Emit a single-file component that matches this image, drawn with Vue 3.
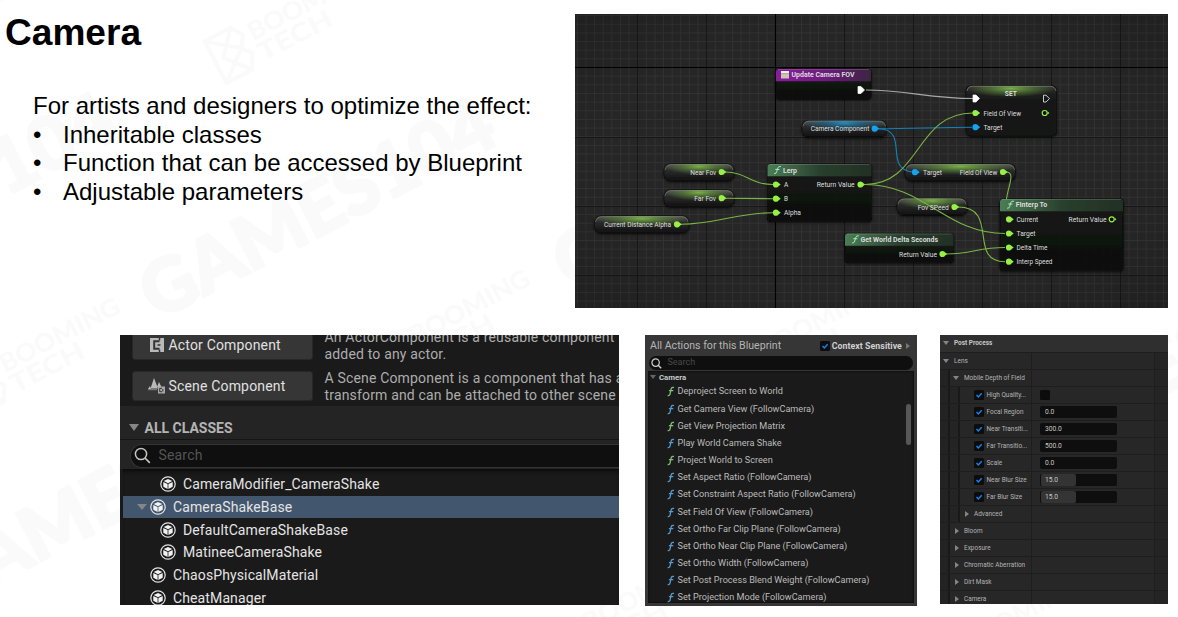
<script setup>
const bullets = ['Inheritable classes', 'Function that can be accessed by Blueprint', 'Adjustable parameters']

/* blueprint graph data */
const cols = Array.from({ length: 70 }, (_, i) => 568.7 + i * 8.62)
const rows = Array.from({ length: 36 }, (_, i) => 15.6 + i * 8.65)
const majorX = [637.5, 706.5, 844.5, 913.5, 982.5, 1051.5, 1120.5]
const majorY = [137.5, 206.5, 275.5]

const pills = [
  { x: 802, y: 120.5, w: 84.5, fill: 'url(#pillBlue)' },
  { x: 905, y: 164, w: 110.5, fill: 'url(#pillGreen)' },
  { x: 664, y: 164, w: 70, fill: 'url(#pillGreen)' },
  { x: 664, y: 190, w: 70, fill: 'url(#pillGreen)' },
  { x: 594.5, y: 216, w: 94.5, fill: 'url(#pillGreen)' },
  { x: 897, y: 198.3, w: 70, fill: 'url(#pillGreen)' },
]
const boxes = [
  { x: 776, y: 69, w: 95, h: 30, head: 'url(#headPurple)' },
  { x: 767.5, y: 164, w: 104, h: 57.5, head: 'url(#headGreen)' },
  { x: 845, y: 233.5, w: 108.5, h: 29, head: 'url(#headGreen)' },
  { x: 1000, y: 199, w: 123, h: 71.5, head: 'url(#headGreen)' },
]
const wires = [
  { c: 'w', d: 'M866 90 C905 90 930 98.5 973 98.5' },
  { c: 'b', d: 'M879 128.8 C910 128.8 940 127.3 972 127.3' },
  { c: 'b', d: 'M879 128.8 C910 130 883 168 912 172' },
  { c: 'g', d: 'M865 184.5 C921 184.5 915 113 973 113' },
  { c: 'g', d: 'M865 184.5 C925 184.5 945 233.5 1005 233.5' },
  { c: 'g', d: 'M1006 172 C1016 172 1008 186 1006.5 199' },
  { c: 'g', d: 'M958 207 C1000 207 967 261.7 1005 261.7' },
  { c: 'g', d: 'M946 254 C972 254 978 247.5 1005 247.5' },
  { c: 'g', d: 'M725 172 C747 172 750 184.5 773 184.5' },
  { c: 'g', d: 'M725 198.2 L773 198.7' },
  { c: 'g', d: 'M681 224.3 C716 224.3 737 212.7 773 212.7' },
]
const pins = [
  [721.7, 172], [721.7, 198.2], [677, 224.3], [776, 184.5], [776, 198.7], [776, 212.7],
  [860.5, 184.5], [954.5, 207], [942.5, 254], [1003, 172], [975.5, 113],
  [1009, 219.3], [1009, 233.5], [1009, 247.5], [1009, 261.7],
]
const bluePins = [[874.7, 128.7], [975.5, 127.2], [915, 172.2]]
const hollowPins = [[1044.7, 113], [1111.7, 219.3]]
const labels = [
  ['Camera Component', 810.7, 131.2, 58.6], ['Field Of View', 983.5, 115.5, 37.5],
  ['Target', 983.5, 129.7, 18.8], ['Target', 923, 174.7, 19], ['Field Of View', 959.8, 174.7, 37.5],
  ['Near Fov', 690.3, 174.6, 26], ['Far Fov', 694.3, 200.7, 21.7],
  ['Current Distance Alpha', 604, 226.8, 67], ['A', 784, 187, 4.3], ['B', 784, 201.2, 4],
  ['Alpha', 784, 215.2, 17], ['Return Value', 816.7, 187, 38], ['Fov SPeed', 917.7, 209.5, 31],
  ['Return Value', 899, 256.5, 38], ['Current', 1016.5, 221.8, 21.7], ['Target', 1016.5, 236, 19],
  ['Delta Time', 1016.5, 250, 31], ['Interp Speed', 1016.5, 264.2, 36], ['Return Value', 1068.5, 221.8, 38],
]
const titles = [
  ['Update Camera FOV', 791.5, 77, 63], ['SET', 1004.8, 95.8, 12], ['Lerp', 783, 172.6, 14],
  ['Get World Delta Seconds', 860.5, 242, 77.5], ['FInterp To', 1015.7, 207.2, 31.6],
]
const fnGlyphs = [[774.5, 165.7], [852.5, 235], [1007.5, 200.3]]

/* class picker */
const classes = [
  { name: 'CameraModifier_CameraShake', child: true },
  { name: 'CameraShakeBase', selected: true },
  { name: 'DefaultCameraShakeBase', child: true },
  { name: 'MatineeCameraShake', child: true },
  { name: 'ChaosPhysicalMaterial' },
  { name: 'CheatManager' },
]

/* blueprint actions */
const actions = [
  ['Deproject Screen to World', 'pure'], ['Get Camera View (FollowCamera)', 'call'],
  ['Get View Projection Matrix', 'pure'], ['Play World Camera Shake', 'call'],
  ['Project World to Screen', 'pure'], ['Set Aspect Ratio (FollowCamera)', 'call'],
  ['Set Constraint Aspect Ratio (FollowCamera)', 'call'], ['Set Field Of View (FollowCamera)', 'call'],
  ['Set Ortho Far Clip Plane (FollowCamera)', 'call'], ['Set Ortho Near Clip Plane (FollowCamera)', 'call'],
  ['Set Ortho Width (FollowCamera)', 'call'], ['Set Post Process Blend Weight (FollowCamera)', 'call'],
  ['Set Projection Mode (FollowCamera)', 'call'],
]

/* post process details */
const details = [
  { t: 'Post Process', kind: 'head', open: true },
  { t: 'Lens', kind: 'l0', open: true },
  { t: 'Mobile Depth of Field', kind: 'l1', open: true },
  { t: 'High Quality...', kind: 'prop', box: true },
  { t: 'Focal Region', kind: 'prop', v: '0.0' },
  { t: 'Near Transiti...', kind: 'prop', v: '300.0' },
  { t: 'Far Transitio...', kind: 'prop', v: '500.0' },
  { t: 'Scale', kind: 'prop', v: '0.0' },
  { t: 'Near Blur Size', kind: 'prop', v: '15.0', fill: 45 },
  { t: 'Far Blur Size', kind: 'prop', v: '15.0', fill: 45 },
  { t: 'Advanced', kind: 'l2' },
  { t: 'Bloom', kind: 'l1' },
  { t: 'Exposure', kind: 'l1' },
  { t: 'Chromatic Aberration', kind: 'l1' },
  { t: 'Dirt Mask', kind: 'l1' },
  { t: 'Camera', kind: 'l1' },
]
</script>

<template>
  <main class="slide">
    <svg class="watermark" viewBox="0 0 1178 617" aria-hidden="true">
      <g class="wm-big">
        <text transform="translate(157 321) rotate(-27.5)" textLength="388" lengthAdjust="spacingAndGlyphs">GAMES104</text>
        <text transform="translate(-224 316) rotate(-27.5)" textLength="388" lengthAdjust="spacingAndGlyphs">GAMES104</text>
        <text transform="translate(570 291) rotate(-27.5)" textLength="388" lengthAdjust="spacingAndGlyphs">GAMES104</text>
        <text transform="translate(-57 612) rotate(-27.5)" textLength="388" lengthAdjust="spacingAndGlyphs">GAMES104</text>
        <text transform="translate(-18 10) rotate(-27.5)">G</text>
        <text transform="translate(1000 480) rotate(-27.5)" textLength="388" lengthAdjust="spacingAndGlyphs">GAMES104</text>
      </g>
      <g class="wm-small">
        <g v-for="(p, i) in [[253, 41], [5, 373], [415, 345], [763, 359], [965, 652], [588, 632]]" :key="i" :transform="`translate(${p[0]} ${p[1]}) rotate(-27.5)`">
          <text textLength="132" lengthAdjust="spacingAndGlyphs">BOOMING</text>
          <text y="23" textLength="80" lengthAdjust="spacingAndGlyphs">TECH</text>
          <path d="M-43 -22 L-14 -22 -6 -10 -14 1 -6 10 -14 25 -43 25Z M-43 -22 L-14 1 -43 25 M-14 -22 L-34 1 -14 25" />
        </g>
      </g>
    </svg>

    <section class="top">
      <div class="copy">
        <h1>Camera</h1>
        <p>For artists and designers to optimize the effect:</p>
        <ul>
          <li v-for="b in bullets" :key="b"><span class="dot">•</span>{{ b }}</li>
        </ul>
      </div>

      <svg class="graph" viewBox="575 14 593 294" width="593" height="294">
        <defs>
          <linearGradient id="body" x1="0" y1="0" x2="0" y2="1">
            <stop offset="0" stop-color="#191b19" /><stop offset="1" stop-color="#0d0f0d" />
          </linearGradient>
          <linearGradient id="pillBase" x1="0" y1="0" x2="0" y2="1">
            <stop offset="0" stop-color="#555" /><stop offset=".35" stop-color="#2c2c2c" /><stop offset="1" stop-color="#101010" />
          </linearGradient>
          <linearGradient id="headGreen"><stop offset="0" stop-color="#4a7d56" /><stop offset=".28" stop-color="#3a5c41" /><stop offset=".5" stop-color="#29402e" /><stop offset="1" stop-color="#223024" /></linearGradient>
          <linearGradient id="headPurple"><stop offset="0" stop-color="#8a1a9c" /><stop offset=".55" stop-color="#6b1a7b" /><stop offset="1" stop-color="#3b2640" /></linearGradient>
          <radialGradient id="pillGreen" cx=".5" cy=".15" r=".5"><stop offset="0" stop-color="#7db648" stop-opacity=".95" /><stop offset=".5" stop-color="#5b8738" stop-opacity=".6" /><stop offset="1" stop-color="#5b8738" stop-opacity="0" /></radialGradient>
          <radialGradient id="pillBlue" cx=".5" cy=".15" r=".5"><stop offset="0" stop-color="#2b8fbd" stop-opacity=".95" /><stop offset=".5" stop-color="#1c6487" stop-opacity=".6" /><stop offset="1" stop-color="#1c6487" stop-opacity="0" /></radialGradient>
          <radialGradient id="vignette" cx=".5" cy=".5" r=".75"><stop offset=".6" stop-opacity="0" /><stop offset="1" stop-opacity=".2" /></radialGradient>
          <filter id="shadow" x="-10%" y="-20%" width="120%" height="150%"><feDropShadow dx="0" dy="1" stdDeviation="1.5" flood-opacity=".8" /></filter>
        </defs>
        <rect x="575" y="14" width="593" height="294" fill="#262626" />
        <g stroke="#333333" stroke-width="1">
          <line v-for="x in cols" :key="'c' + x" :x1="x" :x2="x" y1="14" y2="308" />
          <line v-for="y in rows" :key="'r' + y" :y1="y" :y2="y" x1="575" x2="1168" />
        </g>
        <g stroke="#171717" stroke-width="1">
          <line v-for="x in majorX" :key="'mx' + x" :x1="x" :x2="x" y1="14" y2="308" />
          <line v-for="y in majorY" :key="'my' + y" :y1="y" :y2="y" x1="575" x2="1168" />
        </g>
        <path d="M775.5 14V308M575 67.5H1168" stroke="#000" stroke-width="1.2" />
        <rect x="575" y="14" width="593" height="294" fill="url(#vignette)" />

        <g filter="url(#shadow)">
          <g v-for="(p, i) in pills" :key="i">
            <rect :x="p.x" :y="p.y" :width="p.w" height="16.8" rx="6.5" fill="url(#pillBase)" stroke="#0b0b0b" stroke-width=".6" />
            <rect :x="p.x + 1" :y="p.y" :width="p.w - 2" height="16.5" rx="6" :fill="p.fill" />
            <path :d="`M${p.x + 1} ${p.y + 6}q1-5 6-5.4H${p.x + p.w - 7}q5 .4 6 5.4`" fill="none" stroke="#bbb" stroke-opacity=".38" stroke-width=".8" />
          </g>
          <g v-for="(b, i) in boxes" :key="'b' + i">
            <rect :x="b.x" :y="b.y" :width="b.w" :height="b.h" rx="3" fill="url(#body)" fill-opacity=".92" stroke="#080808" stroke-width=".6" />
            <path :d="`M${b.x} ${b.y + 12.2}v-9.2q0-3 3-3h${b.w - 6}q3 0 3 3v9.2z`" :fill="b.head" />
            <path :d="`M${b.x + 2} ${b.y + 0.5}h${b.w - 4}`" stroke="#fff" stroke-opacity=".2" stroke-width=".8" />
          </g>
          <rect x="966" y="85.7" width="90.5" height="50.3" rx="5" fill="#161816" fill-opacity=".93" stroke="#0b0b0b" stroke-width=".6" />
          <rect x="966.5" y="86" width="89.5" height="17" rx="5" fill="url(#pillBase)" fill-opacity=".5" />
          <rect x="967" y="86" width="88" height="17" rx="5" fill="url(#pillGreen)" />
          <path d="M967 91q1-4.500 5-4.800H1050q5 .3 6 4.800" fill="none" stroke="#bbb" stroke-opacity=".5" stroke-width=".8" />
        </g>

        <path v-for="(w, i) in wires" :key="'w' + i" :d="w.d" :class="['wire', w.c]" />

        <g fill="#96f045">
          <path v-for="(p, i) in pins" :key="'p' + i" :d="`M${p[0]} ${p[1] - 3.1}a3.100 3.100 0 1 0 0 6.200q2 0 2.700-1.500l2-1.600-2-1.600q-.7-1.500-2.700-1.500z`" />
        </g>
        <g fill="#14a3f0">
          <path v-for="(p, i) in bluePins" :key="'bp' + i" :d="`M${p[0]} ${p[1] - 3.1}a3.100 3.100 0 1 0 0 6.200q2 0 2.700-1.500l2-1.600-2-1.600q-.7-1.500-2.700-1.500z`" />
        </g>
        <g v-for="(p, i) in hollowPins" :key="'h' + i">
          <circle :cx="p[0]" :cy="p[1]" r="2.500" fill="#0c0e0c" stroke="#96f045" stroke-width="1.200" />
          <path :d="`M${p[0] + 3} ${p[1] - 1.5}l1.700 1.500-1.700 1.500z`" fill="#96f045" />
        </g>
        <path d="M858 86.500h3l3.500 3.500-3.500 3.500h-3zM973 95h3l3.500 3.500-3.500 3.500h-3z" fill="#fff" stroke="#fff" stroke-width=".7" stroke-linejoin="round" />
        <path d="M1043.500 95.200h2.500l3.500 3.400-3.500 3.400h-2.500z" fill="none" stroke="#ddd" stroke-width=".9" stroke-linejoin="round" />
        <path d="M781 71h8v7.500h-8z" fill="#c9c5b0" /><path d="M781 71h8v2.200h-8z" fill="#f1efe8" />
        <path d="M781 73.600h8" stroke="#8f7a88" stroke-width=".5" />
        <g fill="none" stroke="#a6efb4" stroke-width="1" stroke-linecap="round">
          <path v-for="(f, i) in fnGlyphs" :key="'f' + i" :d="`M${f[0]} ${f[1] + 8}q1.600.500 2.200-2l1-3.500q.7-2.300 2.800-1.700M${f[0] + 1.2} ${f[1] + 3.700}h3.300`" />
        </g>
        <text v-for="(l, i) in labels" :key="'l' + i" class="lbl" :x="l[1]" :y="l[2]" :textLength="l[3]" lengthAdjust="spacingAndGlyphs">{{ l[0] }}</text>
        <text v-for="(l, i) in titles" :key="'t' + i" class="lbl title" :x="l[1]" :y="l[2]" :textLength="l[3]" lengthAdjust="spacingAndGlyphs">{{ l[0] }}</text>
      </svg>
    </section>

    <section class="bottom">
      <div class="picker">
        <div class="common">
          <div class="entry first">
            <div class="btn">
              <svg width="16" height="16" viewBox="0 0 16 16"><path d="M1 1h14v14H1z" fill="#b9b9b9" /><path d="M10.500 4.300H5.200v7.400h5.300" fill="none" stroke="#353535" stroke-width="2" /><path d="M10.500 1v2.500M10.500 12.500V15M11.500 8h-3" fill="none" stroke="#353535" stroke-width="1.500" /></svg>
              <span>Actor Component</span>
            </div>
            <p>An ActorComponent is a reusable component that can be<br>added to any actor.</p>
          </div>
          <div class="entry">
            <div class="btn">
              <svg width="18" height="17" viewBox="0 0 18 17"><path d="M6 1l4 10.500H2.500zM11 5l2.500 5H9zM0 12l2-3 1 3z" fill="#b9b9b9" /><path d="M0 12.700h9" stroke="#888" /><path d="M10 9.500h7v7h-7z" fill="#a8a8a8" /><path d="M14 11.300h-2.300v3.400H14M14.800 12v2.500" fill="none" stroke="#353535" /></svg>
              <span>Scene Component</span>
            </div>
            <p>A Scene Component is a component that has a scene<br>transform and can be attached to other scene</p>
          </div>
        </div>
        <div class="section"><i class="tri down"></i>ALL CLASSES</div>
        <div class="searchrow">
          <div class="search">
            <svg width="17" height="17" viewBox="0 0 17 17"><circle cx="7" cy="7" r="5.600" fill="none" stroke="#c4c4c4" stroke-width="1.500" /><path d="M11 11l4.800 4.800" stroke="#c4c4c4" stroke-width="1.700" /></svg>
            <span>Search</span>
          </div>
        </div>
        <div class="tree">
          <div v-for="c in classes" :key="c.name" class="node" :class="{ child: c.child, selected: c.selected }">
            <i class="tri down" :class="{ hidden: !c.selected }"></i>
            <svg width="16" height="16" viewBox="0 0 16 16">
              <circle cx="8" cy="8" r="7.200" fill="none" stroke="#e4e4e4" stroke-width="1.200" />
              <path d="M8 3l4.300 2.100L8 7.300 3.700 5.100zM3.300 5.900l4.300 2.100v5.100l-4.300-2.400zM12.700 5.900l-4.300 2.100v5.100l4.300-2.400z" fill="#f2f2f2" />
            </svg>
            <span>{{ c.name }}</span>
          </div>
        </div>
      </div>

      <div class="actions">
        <div class="ahead">
          <span>All Actions for this Blueprint</span>
          <span class="check"><svg width="10" height="10" viewBox="0 0 10 10"><path d="M2.500 5l1.800 1.900L7.700 3.300" fill="none" stroke="#1682ee" stroke-width="1.500" /></svg></span>
          <b>Context Sensitive</b><i class="tri right"></i>
        </div>
        <div class="asearch">
          <svg width="11" height="11" viewBox="0 0 11 11"><circle cx="4.600" cy="4.600" r="3.700" fill="none" stroke="#d0d0d0" stroke-width="1.200" /><path d="M7.200 7.200l3 3" stroke="#d0d0d0" stroke-width="1.400" /></svg>
          <span>Search</span>
        </div>
        <div class="alist">
          <div class="cat"><i class="tri down"></i>Camera</div>
          <div v-for="a in actions" :key="a[0]" class="act">
            <svg :class="a[1]" width="8" height="11" viewBox="0 0 8 11"><path d="M.7 9.500q1.900.5 2.400-1.700l1-4.600Q4.600.9 7 1.500M1.900 4.700h4.400" fill="none" stroke="currentColor" stroke-width="1.300" /></svg>
            <span>{{ a[0] }}</span>
          </div>
          <div class="bar"></div>
        </div>
      </div>

      <div class="details">
        <div v-for="d in details" :key="d.t" class="row" :class="d.kind">
          <div class="name">
            <span v-if="d.kind === 'prop'" class="check"><svg width="10" height="10" viewBox="0 0 10 10"><path d="M2.500 5l1.800 1.900L7.700 3.300" fill="none" stroke="#1682ee" stroke-width="1.500" /></svg></span>
            <i v-else class="tri" :class="d.open ? 'down' : 'right'"></i>
            <span>{{ d.t }}</span>
          </div>
          <div class="value">
            <span v-if="d.box" class="check"></span>
            <span v-if="d.v" class="field"><i v-if="d.fill" class="fill" :style="{ width: d.fill + '%' }"></i><em>{{ d.v }}</em></span>
          </div>
          <div class="reset"></div>
        </div>
      </div>
    </section>
  </main>
</template>

<style>
body { margin: 0; background: #fff; overflow: hidden; }
</style>

<style scoped>
* { box-sizing: border-box; }
.slide { position: relative; width: 1178px; height: 617px; overflow: hidden; background: #fff; font-family: Roboto, "Liberation Sans", sans-serif; }
.watermark { position: absolute; inset: 0; width: 1178px; height: 617px; }
.wm-big text { font: 900 74px Lato, sans-serif; fill: #fafafa; stroke: #fafafa; stroke-width: 3; }
.wm-small text { font: 700 25px Lato, sans-serif; fill: #fafafa; }
.wm-small path { fill: none; stroke: #fafafa; stroke-width: 4; }
.top, .bottom { position: relative; display: flex; }
.top { height: 335px; }
.copy { width: 575px; font-family: "Liberation Sans", Arial, sans-serif; color: #000; }
h1 { margin: 10px 0 0 5px; font-size: 37.1px; line-height: 44px; font-weight: 700; }
.copy p { margin: 37.500px 0 0 33px; font-size: 24px; line-height: 28.700px; white-space: nowrap; }
ul { list-style: none; margin: .6px 0 0 33px; padding: 0; font-size: 24px; line-height: 28.600px; }
li { display: flex; }
.dot { width: 30px; }
.graph { margin-top: 14px; display: block; }
.lbl { font: 400 6.700px Roboto, sans-serif; fill: #dedede; }
.lbl.title { font-weight: 700; fill: #dadada; }
.wire { fill: none; stroke-width: 1.100; }
.wire.w { stroke: #a8a8a8; }
.wire.b { stroke: #1580b8; }
.wire.g { stroke: #79b544; }

.bottom { padding-left: 120px; align-items: flex-start; }
.tri { display: inline-block; flex: none; width: 0; height: 0; border: solid transparent; }

.picker { width: 499px; height: 270px; overflow: hidden; background: #1a1a1a; color: #e4e4e4; font-size: 14px; display: flex; flex-direction: column; }
.common { height: 71px; flex: none; padding-left: 12px; overflow: hidden; }
.entry { display: flex; height: 30px; margin-bottom: 11px; white-space: nowrap; }
.entry.first { margin-top: -5.500px; }
.btn { width: 181px; height: 30px; flex: none; border-radius: 3px; background: #363636; border: 1px solid #272727; display: flex; align-items: center; padding-left: 14.500px; color: #e0e0e0; letter-spacing: .17px; }
.btn svg { width: 18px; margin-right: 3px; flex: none; }
.entry p { margin: -.5px 0 0 11.500px; font-size: 14px; line-height: 16.500px; letter-spacing: .17px; color: #adadad; }
.section { height: 33px; flex: none; background: #242424; color: #b4b4b4; font-weight: 700; display: flex; align-items: center; padding: 10px 0 0 9px; line-height: 14px; }
.section .tri, .node .tri { border-width: 7px 5.500px 0; border-top-color: #868686; margin-right: 5.500px; }
.searchrow { height: 30px; flex: none; background: #242424; border-top: 1px solid #151515; padding: 4px 0 0 10px; }
.search { height: 24px; background: #0f0f0f; border: 1px solid #343434; border-right: 0; border-radius: 12px 0 0 12px; display: flex; align-items: center; padding: 0 0 2px 3px; color: #545454; }
.search span { margin-left: 7.500px; letter-spacing: .17px; }
.tree { flex: 1; margin-left: 3px; padding-top: 4px; box-shadow: inset 0 4px 4px -2px #0a0a0a; overflow: hidden; }
.node { height: 22.700px; display: flex; align-items: center; padding-left: 14px; white-space: nowrap; }
.node.child { padding-left: 24px; }
.node.selected { background: #42566e; }
.node .tri { border-width: 6px 5px 0; margin-right: 3px; }
.node .tri.hidden { visibility: hidden; }
.node span { margin-left: 7px; letter-spacing: .12px; }

.actions { width: 272px; height: 271px; margin-left: 26px; background: #363636; padding: 0 3px 3px; overflow: hidden; color: #b5b5b5; }
.ahead { height: 21px; display: flex; align-items: center; padding-left: 2px; font-size: 10.600px; white-space: nowrap; }
.ahead .check { margin-left: 38.500px; margin-right: 2px; }
.ahead b { font-size: 8.800px; font-weight: 700; color: #cfcfcf; letter-spacing: .05px; }
.ahead .tri { border-width: 3px 0 3px 4px; border-left-color: #777; margin-left: 4px; }
.check { width: 10px; height: 10px; background: #0c0c0c; border-radius: 1.500px; display: inline-flex; flex: none; }
.asearch { height: 14px; margin: 0 1px; border-radius: 7px; background: #0f0f0f; display: flex; align-items: center; padding-left: 2px; font-size: 9px; line-height: 11px; color: #484848; }
.asearch span { margin: -1px 0 0 5.500px; }
.alist { position: relative; height: 232px; margin-top: 1px; background: #1a1a1a; overflow: hidden; box-shadow: inset 0 0 3px #080808; }
.cat { height: 12.300px; display: flex; align-items: center; padding-left: 2px; font-size: 7.800px; line-height: 9px; font-weight: 700; color: #c8c8c8; }
.cat .tri { border-width: 4px 3.500px 0; border-top-color: #666; margin-right: 3px; }
.act { height: 17.180px; display: flex; align-items: center; padding-left: 18.500px; font-size: 9.150px; line-height: 11px; color: #bababa; white-space: nowrap; }
.act svg { margin-right: 3px; }
.pure { color: #7fbf74; }
.call { color: #559bd0; }
.bar { position: absolute; left: 258px; top: 33px; width: 5px; height: 41px; border-radius: 2.500px; background: #575757; }

.details { width: 228px; height: 269px; margin-left: 23px; overflow: hidden; background: #272727; color: #b4b4b4; font-size: 6.450px; }
.row { height: 17.050px; display: flex; border-bottom: 1px solid #1e1e1e; }
.name { width: 92px; flex: none; display: flex; align-items: center; border-right: 1px solid #1e1e1e; white-space: nowrap; padding-left: 3px; }
.value { width: 123px; flex: none; display: flex; align-items: center; border-right: 1px solid #1e1e1e; padding-left: 8px; }
.reset { flex: 1; background: #242424; }
.row.head { height: 17.600px; background: #2f2f2f; font-weight: 700; color: #c6c6c6; }
.head .name, .head .value { border-color: transparent; }
.head .reset { background: none; }
.row .tri.down { border-width: 4px 3px 0; border-top-color: #858585; margin-right: 5px; }
.row .tri.right { border-width: 3.500px 0 3.500px 4px; border-left-color: #858585; margin-right: 5.500px; margin-left: 1.500px; }
.l1 .name { padding-left: 13px; background: linear-gradient(90deg, #232323 8px, #191919 8px 10px, transparent 10px); }
.l2 .name { padding-left: 23px; }
.prop .name { padding-left: 33.500px; }
.l2 .name, .prop .name { background: linear-gradient(90deg, #232323 8px, #191919 8px 10px, #242424 10px 18px, #191919 18px 20px, transparent 20px); }
.prop .name .check { margin-right: 3px; }
.field { position: relative; width: 77px; height: 11.500px; border-radius: 2px; background: #0e0e0e; overflow: hidden; display: flex; align-items: center; color: #c8c8c8; }
.field em { position: relative; font-style: normal; margin-left: 5px; font-size: 6.700px; }
.fill { position: absolute; left: 1px; top: 0; bottom: 0; background: #343434; border-radius: 2px; }
</style>
